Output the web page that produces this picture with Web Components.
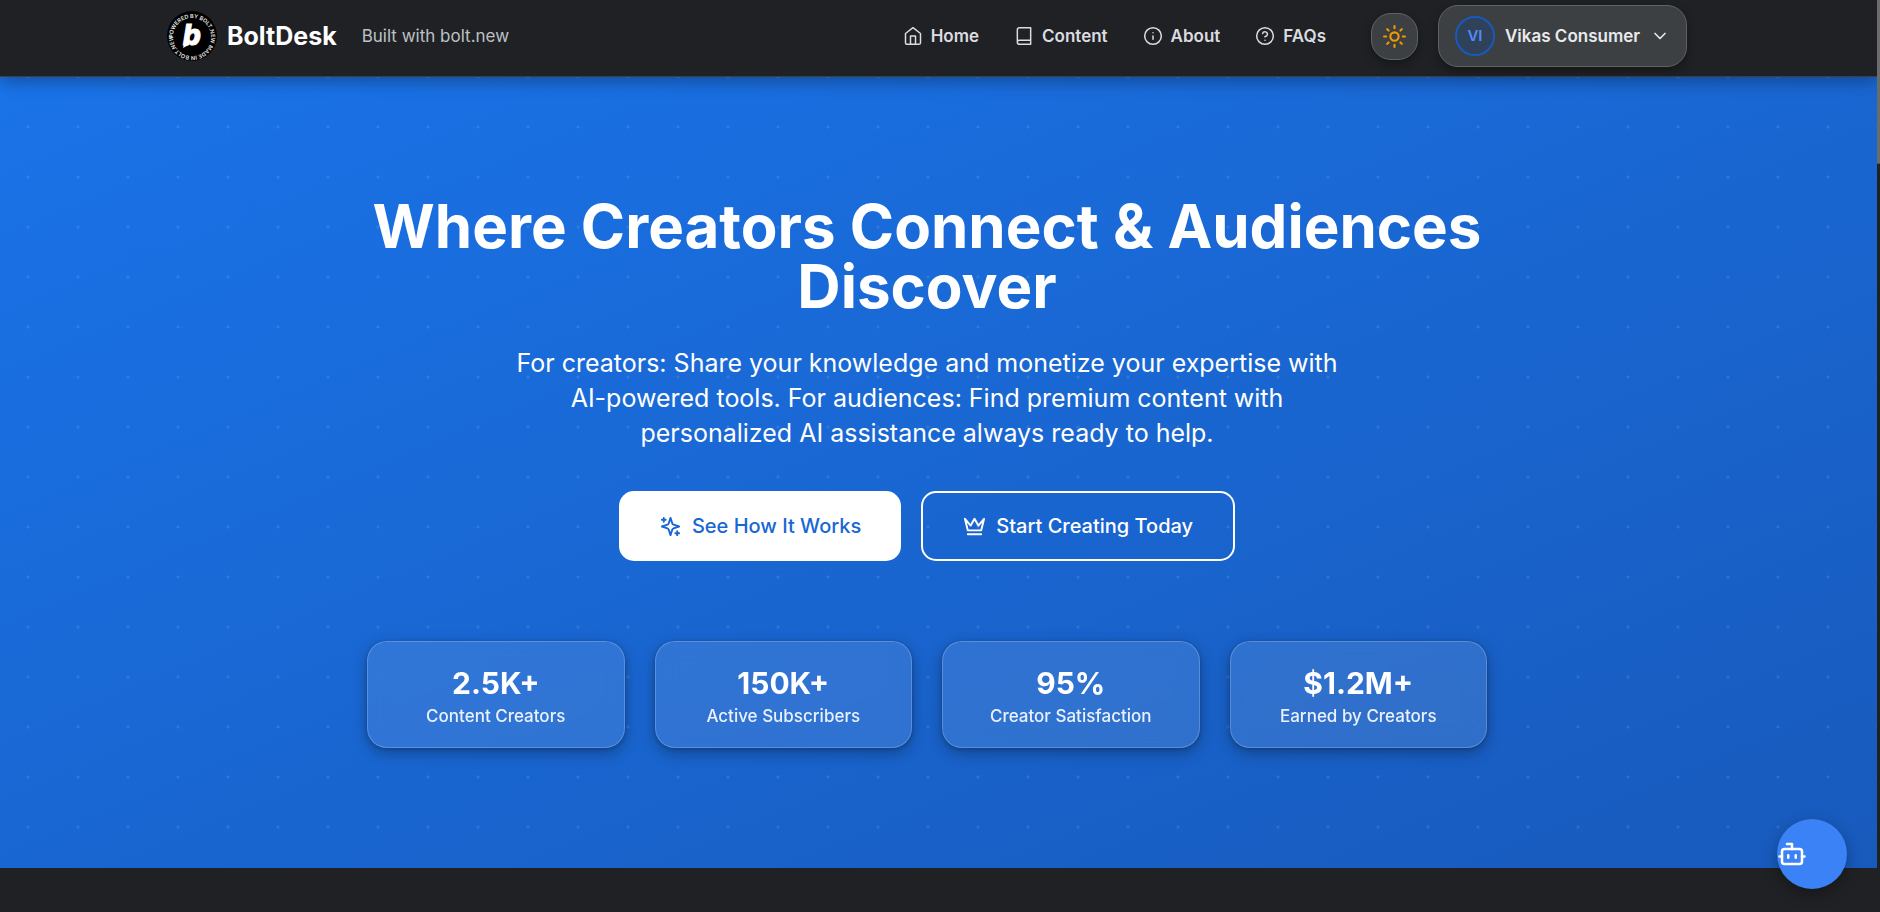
<!DOCTYPE html>
<html lang="en">
<head>
<meta charset="utf-8">
<meta name="viewport" content="width=device-width, initial-scale=1">
<title>BoltDesk</title>
<style>
  html, body { margin: 0; height: 100%; }
  body {
    --ink: #202124;
    --gutter: 23px;
    background: var(--ink);
    color: #fff;
    font-family: Inter, "Liberation Sans", sans-serif;
    overflow: hidden;
  }
</style>
</head>
<body>
<bd-app></bd-app>

<template id="t-app">
  <style>
    :host { display: grid; grid-template-columns: minmax(0, 1fr) 3px; height: 100%; }
    .page { display: flex; flex-direction: column; overflow: hidden; }
    bd-chat { position: fixed; right: 33px; bottom: 23px; }
  </style>
  <div class="page">
    <bd-header>
      <bd-nav-item icon="home" href="#home">Home</bd-nav-item>
      <bd-nav-item icon="book" href="#content">Content</bd-nav-item>
      <bd-nav-item icon="info" href="#about">About</bd-nav-item>
      <bd-nav-item icon="help" href="#faqs">FAQs</bd-nav-item>
    </bd-header>
    <bd-hero>
      <span slot="title">Where Creators Connect &amp; Audiences Discover</span>
      <span slot="lead">For creators: Share your knowledge and monetize your expertise with AI-powered tools. For audiences: Find premium content with personalized AI assistance always ready to help.</span>
      <bd-button slot="actions" icon="sparkles" kind="solid">See How It Works</bd-button>
      <bd-button slot="actions" icon="crown" kind="outline">Start Creating Today</bd-button>
      <bd-stat slot="stats" value="2.5K+">Content Creators</bd-stat>
      <bd-stat slot="stats" value="150K+">Active Subscribers</bd-stat>
      <bd-stat slot="stats" value="95%">Creator Satisfaction</bd-stat>
      <bd-stat slot="stats" value="$1.2M+">Earned by Creators</bd-stat>
    </bd-hero>
  </div>
  <bd-scrollbar></bd-scrollbar>
  <bd-chat></bd-chat>
</template>

<template id="t-header">
  <style>
    :host {
      display: block; position: relative; z-index: 2;
      background: var(--ink); border-bottom: 1px solid #3c4043;
      box-shadow: 0 5px 15px rgba(0, 0, 0, .3);
      padding: 5px var(--gutter) 9px 0;
    }
    .bar { display: flex; align-items: center; max-width: 1520px; margin: 0 auto; }
    .brand { display: flex; align-items: center; gap: 10px; color: #fff; text-decoration: none; font-size: 25px; font-weight: 700; line-height: 30px; }
    .tag { margin-left: 25px; font-size: 17px; line-height: 24px; color: #bdc1c6; }
    nav { display: flex; gap: 35px; margin-left: auto; }
    .tools { display: flex; align-items: center; gap: 20px; margin-left: 45px; }
    button { font: inherit; cursor: pointer; box-sizing: border-box; background: #3c4043; border: 1px solid #5f6368; border-radius: 20px; box-shadow: 0 4px 10px rgba(0, 0, 0, .35); display: flex; align-items: center; }
    .theme { width: 47px; height: 47px; padding: 0; justify-content: center; color: #f29900; --size: 25px; }
    .user { height: 62px; padding: 0 16px; gap: 10px; color: #e8eaed; font-size: 17px; font-weight: 600; }
    .avatar { box-sizing: border-box; width: 40px; height: 40px; border-radius: 50%; border: 2px solid #185abc; background: #30415a; color: #4f8df5; font-size: 15px; line-height: 36px; text-align: center; }
  </style>
  <div class="bar">
    <a class="brand" href="#top"><bd-logo></bd-logo>BoltDesk</a>
    <span class="tag">Built with bolt.new</span>
    <nav aria-label="Main"><slot></slot></nav>
    <div class="tools">
      <button class="theme" aria-label="Toggle theme"><bd-icon name="sun"></bd-icon></button>
      <button class="user"><span class="avatar">VI</span><span>Vikas Consumer</span><bd-icon name="chevron"></bd-icon></button>
    </div>
  </div>
</template>

<template id="t-logo">
  <style>
    :host { display: block; width: 50px; height: 50px; }
    svg { display: block; }
    .ring { font: 600 11px Inter, sans-serif; fill: #e8e8e8; }
    .b { font: italic 800 56px Inter, sans-serif; fill: #fff; stroke: #fff; stroke-width: 2px; }
  </style>
  <svg width="50" height="50" viewBox="0 0 100 100" aria-hidden="true">
    <defs><path id="ring" d="M50 50m-38 4a38 38 0 1 1 76 -4a38 38 0 1 1 -76 4"/></defs>
    <circle cx="50" cy="50" r="50" fill="#000"/>
    <text class="ring"><textPath href="#ring">POWERED BY BOLT.NEW MADE IN BOLT.NEW</textPath></text>
    <text class="b" x="32" y="67">b</text>
    <path d="M36 56 32 74 45 67z" fill="#fff"/>
  </svg>
</template>

<template id="t-nav-item">
  <style>
    :host { display: block; }
    a { display: flex; align-items: center; gap: 8px; color: #dadce0; text-decoration: none; font-size: 17px; font-weight: 600; line-height: 24px; }
  </style>
  <a><bd-icon weight="1.8"></bd-icon><slot></slot></a>
</template>

<template id="t-hero">
  <style>
    :host {
      display: block;
      padding: 119px var(--gutter) 120px 0;
      background:
        radial-gradient(circle at 25px 25px, rgba(255, 255, 255, .1) 1px, transparent 2px) 3px -25px / 50px 50px,
        linear-gradient(to bottom right, #1a73e8, #185abc);
      text-align: center;
    }
    .inner { max-width: 1120px; margin: 0 auto; }
    h1 { margin: 0; font-size: 60px; line-height: 60px; font-weight: 700; }
    p { margin: 30px auto 0; max-width: 840px; font-size: 25px; line-height: 35px; }
    .actions { display: flex; justify-content: center; gap: 20px; margin-top: 40px; }
    .stats { display: grid; grid-template-columns: repeat(4, 1fr); gap: 30px; margin-top: 80px; }
  </style>
  <div class="inner">
    <h1><slot name="title"></slot></h1>
    <p><slot name="lead"></slot></p>
    <div class="actions"><slot name="actions"></slot></div>
    <div class="stats"><slot name="stats"></slot></div>
  </div>
</template>

<template id="t-button">
  <style>
    :host { display: block; }
    button { box-sizing: border-box; height: 70px; padding: 0 40px; display: flex; align-items: center; gap: 10px; font: 500 20px/30px Inter, sans-serif; border: 2px solid #fff; border-radius: 15px; background: transparent; color: #fff; cursor: pointer; --size: 23px; }
    :host([kind="solid"]) button { border: 0; background: #fff; color: #1967d2; }
  </style>
  <button><bd-icon></bd-icon><span><slot></slot></span></button>
</template>

<template id="t-stat">
  <style>
    :host { display: block; padding: 22px 0 17px; border: 1px solid rgba(255, 255, 255, .2); border-radius: 20px; background: rgba(255, 255, 255, .1); box-shadow: 0 5px 15px rgba(0, 0, 0, .3), 0 1px 4px rgba(0, 0, 0, .2); backdrop-filter: blur(10px); }
    .value { font-size: 30px; line-height: 38px; font-weight: 700; }
    .label { font-size: 17px; line-height: 28px; font-weight: 500; color: rgba(255, 255, 255, .9); }
  </style>
  <div class="value"></div>
  <div class="label"><slot></slot></div>
</template>

<template id="t-chat">
  <style>
    :host { display: block; z-index: 3; }
    button { width: 70px; height: 70px; padding: 0; border: 0; border-radius: 50%; background: #3b82f6; color: #fff; display: flex; align-items: center; box-shadow: 0 5px 15px rgba(0, 0, 0, .3); cursor: pointer; --size: 30px; }
  </style>
  <button aria-label="Open chat assistant"><bd-icon name="bot"></bd-icon></button>
</template>

<template id="t-scrollbar">
  <style>
    :host { display: block; background: var(--ink); }
    div { height: 18%; background: #6b6b6b; border-radius: 0 0 3px 3px; }
  </style>
  <div></div>
</template>

<script>
const ICONS = {
  home: '<path d="m3 9 9-7 9 7v11a2 2 0 0 1-2 2H5a2 2 0 0 1-2-2z"/><path d="M9 22V12h6v10"/>',
  book: '<path d="M4 19.5v-15A2.500 2.500 0 0 1 6.500 2H20v20H6.500a2.500 2.500 0 0 1 0-5H20"/>',
  info: '<circle cx="12" cy="12" r="10"/><path d="M12 16v-4M12 8h.01"/>',
  help: '<circle cx="12" cy="12" r="10"/><path d="M9.090 9a3 3 0 0 1 5.830 1c0 2-3 3-3 3M12 17h.01"/>',
  sun: '<circle cx="12" cy="12" r="4"/><path d="M12 2v2M12 20v2M4.930 4.930l1.410 1.410M17.660 17.660l1.410 1.410M2 12h2M20 12h2M6.340 17.660l-1.410 1.410M19.070 4.930l-1.410 1.410"/>',
  chevron: '<path d="m6 9 6 6 6-6"/>',
  sparkles: '<path d="m12 3-1.912 5.813a2 2 0 0 1-1.275 1.275L3 12l5.813 1.912a2 2 0 0 1 1.275 1.275L12 21l1.912-5.813a2 2 0 0 1 1.275-1.275L21 12l-5.813-1.912a2 2 0 0 1-1.275-1.275L12 3Z"/><path d="M5 3v4M19 17v4M3 5h4M17 19h4"/>',
  crown: '<path d="m2 4 3 12h14l3-12-6 7-4-7-4 7-6-7zM5 20h14"/>',
  bot: '<path d="M12 8V4H8"/><rect width="16" height="12" x="4" y="8" rx="2"/><path d="M2 14h2M20 14h2M15 13v2M9 13v2"/>'
};

class BdElement extends HTMLElement {
  constructor() {
    super();
    const id = 't-' + this.localName.slice(3);
    this.attachShadow({ mode: 'open' }).append(document.getElementById(id).content.cloneNode(true));
  }
}

class BdIcon extends HTMLElement {
  static observedAttributes = ['name', 'weight'];
  constructor() { super(); this.attachShadow({ mode: 'open' }); }
  attributeChangedCallback() {
    this.shadowRoot.innerHTML = `<style>
      :host { display: block; flex: none; width: var(--size, 20px); height: var(--size, 20px); }
      svg { display: block; width: 100%; height: 100%; }
    </style>
    <svg viewBox="0 0 24 24" fill="none" stroke="currentColor" stroke-width="${this.getAttribute('weight') || 2}"
      stroke-linecap="round" stroke-linejoin="round" aria-hidden="true">${ICONS[this.getAttribute('name')] || ''}</svg>`;
  }
}

class BdNavItem extends BdElement {
  connectedCallback() {
    this.shadowRoot.querySelector('a').href = this.getAttribute('href');
    this.shadowRoot.querySelector('bd-icon').setAttribute('name', this.getAttribute('icon'));
  }
}

class BdButton extends BdElement {
  connectedCallback() {
    this.shadowRoot.querySelector('bd-icon').setAttribute('name', this.getAttribute('icon'));
  }
}

class BdStat extends BdElement {
  connectedCallback() {
    this.shadowRoot.querySelector('.value').textContent = this.getAttribute('value');
  }
}

customElements.define('bd-icon', BdIcon);
customElements.define('bd-logo', class extends BdElement {});
customElements.define('bd-nav-item', BdNavItem);
customElements.define('bd-header', class extends BdElement {});
customElements.define('bd-button', BdButton);
customElements.define('bd-stat', BdStat);
customElements.define('bd-hero', class extends BdElement {});
customElements.define('bd-chat', class extends BdElement {});
customElements.define('bd-scrollbar', class extends BdElement {});
customElements.define('bd-app', class extends BdElement {});
</script>
</body>
</html>
